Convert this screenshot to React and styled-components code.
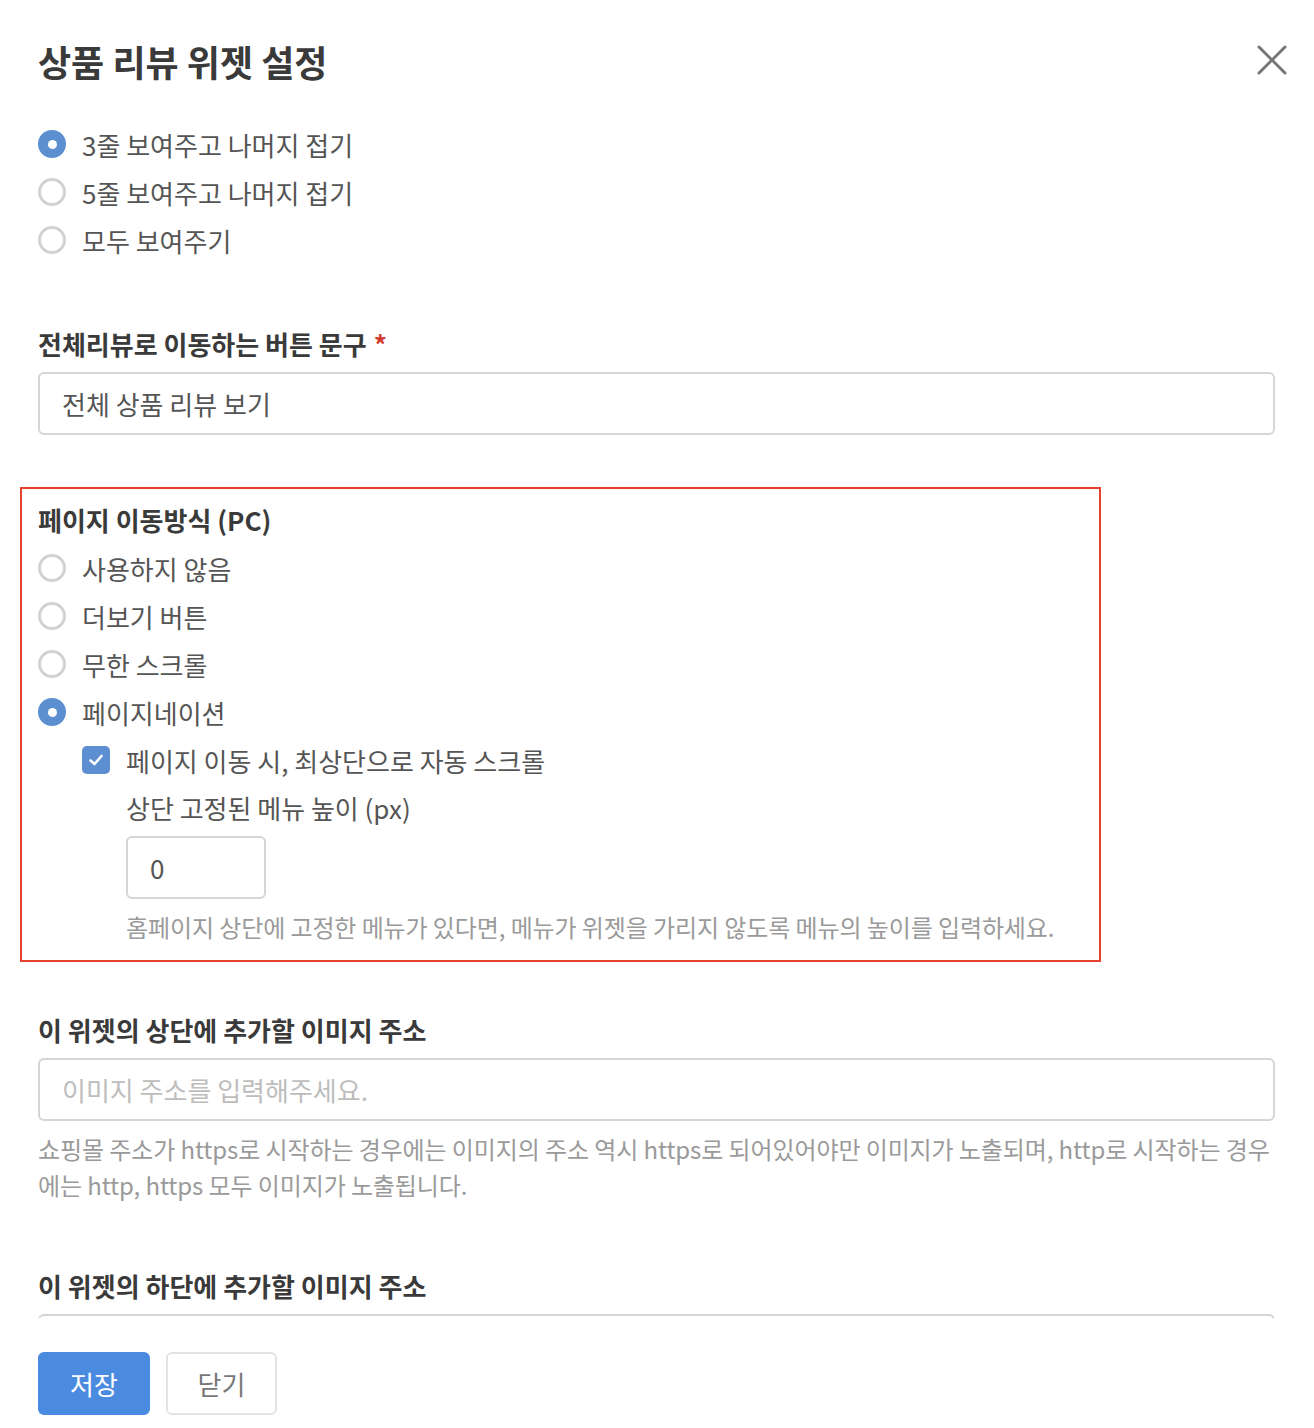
import React from "react";
import styled, { createGlobalStyle } from "styled-components";

const Global = createGlobalStyle`
  html, body { margin: 0; padding: 0; background: #fff; }
  body { font-family: "Noto Sans CJK KR", "Noto Sans", sans-serif; color: #555; }
  * { box-sizing: border-box; }
`;

const Modal = styled.div`
  height: 100vh;
  display: flex;
  flex-direction: column;
  background: #fff;
`;

const Header = styled.header`
  display: flex;
  align-items: center;
  justify-content: space-between;
  padding: 36px 39px 0 38px;
  height: 86px;
`;

const Title = styled.h1`
  margin: 0;
  font-size: 36px;
  font-weight: 700;
  line-height: 50px;
  color: #3a3a3a;
`;

const CloseButton = styled.button`
  width: 34px;
  height: 34px;
  margin-right: -14px;
  margin-top: -2px;
  padding: 0;
  border: 0;
  background: none;
  display: flex;
  align-items: center;
  justify-content: center;
  cursor: pointer;
`;

const Body = styled.div`
  flex: 1;
  min-height: 0;
  overflow: hidden;
  padding: 34px 39px 0 38px;
`;

const RadioRow = styled.label`
  display: flex;
  align-items: center;
  gap: 16px;
  height: 48px;
  font-size: 26px;
  color: #555;
  padding-left: ${(p) => p.$indent || 0}px;
`;

const RadioDot = styled.span`
  width: 28px;
  height: 28px;
  border-radius: 50%;
  flex-shrink: 0;
  border: ${(p) => (p.$checked ? "0" : "3px solid #d3d3d3")};
  background: ${(p) => (p.$checked ? "#5b8fcf" : "#fff")};
  display: flex;
  align-items: center;
  justify-content: center;
  &::after {
    content: "";
    display: ${(p) => (p.$checked ? "block" : "none")};
    width: 9px;
    height: 9px;
    border-radius: 50%;
    background: #fff;
  }
`;

const CheckBox = styled.span`
  width: 28px;
  height: 28px;
  border-radius: 5px;
  background: #5b8fcf;
  flex-shrink: 0;
  display: flex;
  align-items: center;
  justify-content: center;
`;

const Field = styled.section`
  margin-top: ${(p) => p.$top}px;
`;

const Label = styled.div`
  font-size: 26px;
  font-weight: 700;
  line-height: 36px;
  color: #3a3a3a;
`;

const GroupLabel = styled(Label)`
  line-height: 48px;
`;

const Required = styled.span`
  color: #d23a2e;
  margin-left: 7px;
`;

const TextInput = styled.input`
  display: block;
  width: ${(p) => (p.$small ? "140px" : "100%")};
  height: 63px;
  margin-top: ${(p) => (p.$mt != null ? p.$mt : 10)}px;
  padding: 0 22px;
  border: 2px solid #d5d5d5;
  border-radius: 6px;
  font-family: inherit;
  font-size: 26px;
  color: #555;
  background: #fff;
  outline: none;
  &::placeholder { color: #bdbdbd; }
`;

const Help = styled.p`
  margin: 10px 0 0;
  font-size: 24px;
  line-height: 36px;
  letter-spacing: -0.1px;
  color: #9a9a9a;
`;

const Highlight = styled.div`
  margin-top: 52px;
  margin-left: -18px;
  width: 1081px;
  border: 2px solid #e5432f;
  padding: 7px 16px 15px;
`;

const SubBlock = styled.div`
  padding-left: 88px;
`;

const SubLabel = styled.div`
  font-size: 26px;
  line-height: 48px;
  color: #555;
`;

const Footer = styled.footer`
  display: flex;
  gap: 16px;
  padding: 34px 39px 13px 38px;
`;

const Button = styled.button`
  width: ${(p) => (p.$primary ? "112px" : "111px")};
  height: 63px;
  border-radius: 6px;
  font-family: inherit;
  font-size: 26px;
  cursor: pointer;
  border: 2px solid ${(p) => (p.$primary ? "#4a8be0" : "#e3e3e3")};
  background: ${(p) => (p.$primary ? "#4a8be0" : "#fff")};
  color: ${(p) => (p.$primary ? "#fff" : "#777")};
`;

const Radio = ({ checked, children, indent }) => (
  <RadioRow $indent={indent}>
    <RadioDot $checked={checked} />
    {children}
  </RadioRow>
);

export default function App() {
  return (
    <>
      <Global />
      <Modal>
        <Header>
          <Title>상품 리뷰 위젯 설정</Title>
          <CloseButton aria-label="닫기">
            <svg width="30" height="30" viewBox="0 0 30 30">
              <path d="M2 2 L28 28 M28 2 L2 28" stroke="#777" strokeWidth="3" strokeLinecap="round" />
            </svg>
          </CloseButton>
        </Header>
        <Body>
          <Radio checked>3줄 보여주고 나머지 접기</Radio>
          <Radio>5줄 보여주고 나머지 접기</Radio>
          <Radio>모두 보여주기</Radio>

          <Field $top={62}>
            <Label>
              전체리뷰로 이동하는 버튼 문구<Required>*</Required>
            </Label>
            <TextInput defaultValue="전체 상품 리뷰 보기" />
          </Field>

          <Highlight>
            <GroupLabel>페이지 이동방식 (PC)</GroupLabel>
            <Radio>사용하지 않음</Radio>
            <Radio>더보기 버튼</Radio>
            <Radio>무한 스크롤</Radio>
            <Radio checked>페이지네이션</Radio>
            <RadioRow $indent={44}>
              <CheckBox>
                <svg width="18" height="18" viewBox="0 0 18 18">
                  <path d="M3.5 9.5 L7.5 13 L14.5 5" fill="none" stroke="#fff" strokeWidth="2.6" strokeLinecap="round" strokeLinejoin="round" />
                </svg>
              </CheckBox>
              페이지 이동 시, 최상단으로 자동 스크롤
            </RadioRow>
            <SubBlock>
              <SubLabel>상단 고정된 메뉴 높이 (px)</SubLabel>
              <TextInput $small $mt={4} defaultValue="0" />
              <Help>홈페이지 상단에 고정한 메뉴가 있다면, 메뉴가 위젯을 가리지 않도록 메뉴의 높이를 입력하세요.</Help>
            </SubBlock>
          </Highlight>

          <Field $top={50}>
            <Label>이 위젯의 상단에 추가할 이미지 주소</Label>
            <TextInput placeholder="이미지 주소를 입력해주세요." />
            <Help>
              쇼핑몰 주소가 https로 시작하는 경우에는 이미지의 주소 역시 https로 되어있어야만 이미지가 노출되며, http로 시작하는 경우에는 http, https 모두 이미지가 노출됩니다.
            </Help>
          </Field>

          <Field $top={65}>
            <Label>이 위젯의 하단에 추가할 이미지 주소</Label>
            <TextInput placeholder="이미지 주소를 입력해주세요." />
          </Field>
        </Body>
        <Footer>
          <Button $primary>저장</Button>
          <Button>닫기</Button>
        </Footer>
      </Modal>
    </>
  );
}
